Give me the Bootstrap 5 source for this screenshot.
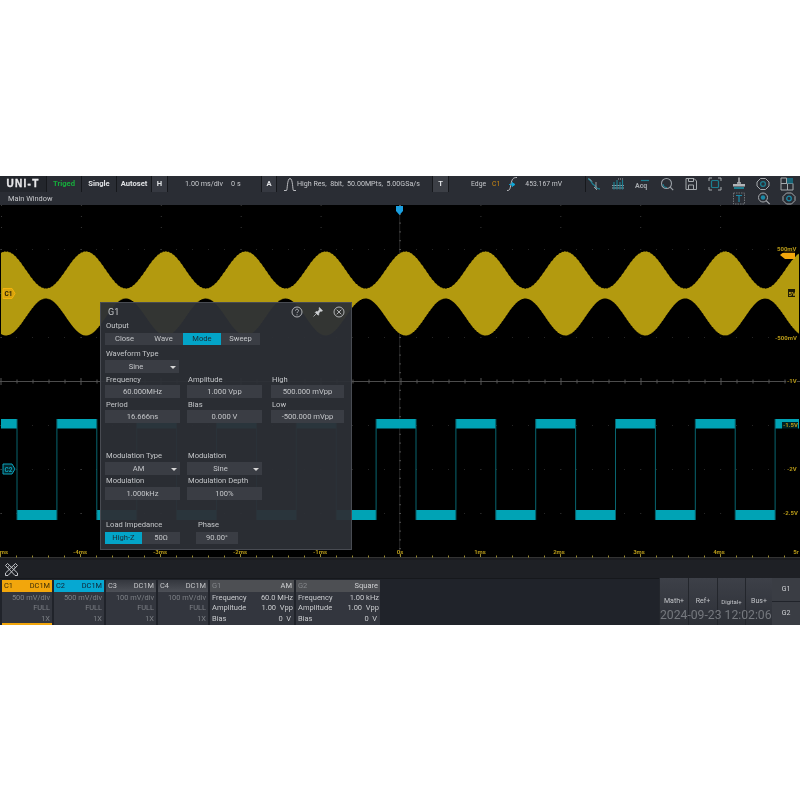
<!DOCTYPE html>
<html lang="en">
<head>
<meta charset="utf-8">
<title>UNI-T scope</title>
<link rel="stylesheet" href="https://cdn.jsdelivr.net/npm/bootstrap@5.3.0/dist/css/bootstrap.min.css">
<style>
html,body{background:#fff;margin:0}
body{font-family:Roboto,"Liberation Sans",sans-serif;font-size:7.6px;line-height:1;color:#c4c6ca}
.scope{margin-top:176px;width:800px;height:449px;background:#1b1d22;overflow:hidden;position:relative;filter:blur(.3px)}
.topbar{height:16px;background:#16181c;gap:1px}
.tb{height:16px;background:#2a2d34;font-size:7.6px;font-weight:700;color:#dfe1e4;flex:none}
.tb-logo{width:46px;background:#23262c;color:#e8e8ea;font-family:"Liberation Sans",sans-serif;font-size:10px;font-weight:700;letter-spacing:1.3px;-webkit-text-stroke:.3px #e8e8ea}
.tb-trig{width:34px;color:#16ad3c}
.tb-single{width:34px}
.tb-auto{width:34px}
.tb-h{width:15px;background:#363941}
.tb-time{width:93px;font-weight:400;font-size:7.2px;color:#c6c8cc;gap:8px;padding-left:17px}
.tb-a{width:14px;background:#363941}
.tb-acq{width:155px;font-weight:400;font-size:7.1px;color:#c6c8cc;padding-left:6px;white-space:nowrap}
.tb-t{width:15px;background:#3c3f46}
.tb-edge{width:136px;font-weight:400;font-size:6.8px;color:#c6c8cc;gap:6px;padding-left:22px}
.or{color:#d08a10}
.tb-tools{flex:1;justify-content:space-between;padding:0 6px 0 1px}
.tb-tools svg,.ttl-tools svg{opacity:.8}
.ttl{height:13px;background:#2a2d34;font-size:7.4px;color:#c8cacd;padding-left:8px}
.ttl-tools{gap:11px;margin-left:auto;padding-right:4px}
.plot{height:355px;background:#000;position:relative;overflow:hidden;flex:none}
.plot>svg{display:block}
.axl{font:700 6px Roboto,"Liberation Sans",sans-serif;fill:#b89a18}
.panel{position:absolute;left:100px;top:97px;width:252px;height:248px;background:rgba(44,47,54,.95);border:1px solid #484b52;padding:0 4px;color:#c4c6c9}
.phead{height:18px;font-size:9px;padding-left:3px}
.pico{gap:9px;margin-left:auto;padding-right:2px}
.plab{height:10px;display:flex;align-items:center;padding-left:1px}
.lab11{height:11px;margin-top:1px}
.lab12{height:12px}
.seg{height:12px;background:#3a3d44}
.seg>span{display:flex;align-items:center;justify-content:center;height:100%}
.seg .on{background:#03a4c8;color:#1b2a33}
.seg-main{width:155px;margin-top:2px}
.sw39{width:39px}.sw38{width:38px}.sw37{width:37px}
.fld{height:13px;background:#3a3d44;display:flex;align-items:center;justify-content:center;position:relative}
.fsel{padding-right:8px;margin-top:1px}
.fsel-type{width:74px;padding-right:12px;margin-top:1px}
.car{position:absolute;right:3px;top:6px;width:0;height:0;border:3px solid transparent;border-top-color:#d6d6d6;border-bottom:0}
.fgrid{display:grid;grid-template-columns:75px 75px 75px;column-gap:7px}
.fgrid .c3{margin-left:2px}
.fgap{margin-top:28px}
.wt{margin-top:4px}
.lrow{margin-top:20px}
.lw{width:75px}
.pw{width:42px;margin-left:16px}
.plabp{padding-left:2px}
.seg2{margin-top:2px}
.fld12{height:12px;margin-top:2px}
.bottom-tools{height:18px;background:#1e2025;padding-left:4px;flex:none}
.chs{height:47px;background:#16181c;padding:2px 0 0 2px;gap:2px;position:relative;flex:none}
.chs-bg{background:#20232a;position:absolute;left:0;right:0;top:1px;bottom:0}
.chan{width:50px;height:45px;background:#33363e;color:#7d8086;font-size:7.4px;text-align:right;position:relative;flex:none}
.chan .hd{height:12px;display:flex;justify-content:space-between;align-items:center;padding:0 2px;background:linear-gradient(#34373e,#4d5057);color:#c5c6c9}
.chan.c1 .hd{background:#f2a60c;color:#3a2c08}
.chan.c2 .hd{background:#06a8d2;color:#123}
.chan.c1:after{content:"";position:absolute;left:0;right:0;bottom:0;height:2px;background:#f2a60c}
.chan p{margin:0;height:10.5px;display:flex;align-items:center;justify-content:flex-end;padding-right:2px}
.gen{width:84px;height:45px;background:#33363e;color:#c9cbce;font-size:7.5px;position:relative;flex:none}
.gen .hd{height:12px;display:flex;justify-content:space-between;align-items:center;padding:0 2px;background:#4d4f53;color:#cfd0d2}
.gen .hd em{font-style:normal;color:#85878b}
.gen p{margin:0;height:10.5px;display:flex;justify-content:space-between;align-items:center;padding:0 1px 0 2px}
.rbtns{margin-left:auto;height:47px;margin-top:-2px;gap:0;position:relative;flex:none}
.rb{height:47px;background:linear-gradient(#3d4048,#2d3037);border-left:1px solid #23262c;color:#c2c4c8;font-size:7px;display:flex;align-items:flex-start;justify-content:center;padding-top:20px;flex:none}
.rb1{width:29px}.rb2{width:29px}.rb3{width:28px}.rb4{width:27px}
.rb3{font-size:6px;padding-top:21px}
.rg{width:28px;gap:1px;flex:none}
.rg span{flex:1;display:flex;align-items:center;justify-content:center;background:#3a3d44;color:#d0d2d5;font-size:7px}
.clock{position:absolute;left:660px;top:31px;font-size:12.2px;color:#75787e;white-space:nowrap}
</style>
</head>
<body>
<div class="scope d-flex flex-column">
  <div class="topbar d-flex">
    <div class="tb tb-logo d-flex align-items-center justify-content-center">UNI-T</div>
    <div class="tb tb-trig d-flex align-items-center justify-content-center">Triged</div>
    <div class="tb tb-single d-flex align-items-center justify-content-center">Single</div>
    <div class="tb tb-auto d-flex align-items-center justify-content-center">Autoset</div>
    <div class="tb tb-h d-flex align-items-center justify-content-center">H</div>
    <div class="tb tb-time d-flex align-items-center"><span>1.00 ms/div</span><span>0 s</span></div>
    <div class="tb tb-a d-flex align-items-center justify-content-center">A</div>
    <div class="tb tb-acq d-flex align-items-center">
      <svg width="14" height="16" viewBox="0 0 14 16" fill="none" stroke="#c8cacd" stroke-width=".9"><path d="M1 14.500h2.500c1 0 .5-12 3.500-12s2.500 12 3.500 12H13"/></svg>
      <span>High Res,&nbsp; 8bit,&nbsp; 50.00MPts,&nbsp; 5.00GSa/s</span>
    </div>
    <div class="tb tb-t d-flex align-items-center justify-content-center">T</div>
    <div class="tb tb-edge d-flex align-items-center">
      <span>Edge</span><span class="or">C1</span>
      <svg width="13" height="16" viewBox="0 0 13 16" fill="none"><path d="M1 14.500c3 0 3-1.500 4-6.500s2-6.500 6-6.500" stroke="#c8cacd" stroke-width=".9"/><path d="M3 8.500h5M9 8.500l-3-2v4z" stroke="#10a8d8" stroke-width=".9" fill="#10a8d8"/></svg>
      <span>453.167 mV</span>
    </div>
    <div class="tb tb-tools d-flex align-items-center">
      <svg width="14" height="14" viewBox="0 0 14 14" fill="none"><path d="M1 2c2 0 3 2 4 4s3 2 4 4 2 2 4 2" stroke="#1a93a8" stroke-width="1.300"/><path d="M2 1.500l3 3M9 5v7M7 10l3 3" stroke="#c4c8cc" stroke-width=".9"/></svg>
      <svg width="14" height="14" viewBox="0 0 14 14" fill="none"><path d="M1 8.500h12M1 11h12" stroke="#c4c8cc" stroke-width=".9"/><path d="M3 12.500V5M6 12.500V3M9 12.500V5M11.500 12.500V3" stroke="#1a93a8" stroke-width="1.200"/><path d="M7 2h6" stroke="#c4c8cc" stroke-width="1.200" stroke-dasharray="1 1"/></svg>
      <svg width="15" height="14" viewBox="0 0 15 14" fill="none"><path d="M6 3.500h8" stroke="#1a93a8" stroke-width="1.200"/><text x="0" y="11" font-family="Roboto,sans-serif" font-size="7" font-weight="700" fill="#c4c8cc">Acq</text></svg>
      <svg width="14" height="14" viewBox="0 0 14 14" fill="none"><circle cx="6.500" cy="6.500" r="5" stroke="#b5bcc2" stroke-width="1.100"/><path d="M3 7a4 4 0 0 0 4 3.500" stroke="#1a93a8" stroke-width="1.100"/><path d="M10.200 10.200l3 3" stroke="#b5bcc2" stroke-width="1.200"/></svg>
      <svg width="14" height="14" viewBox="0 0 14 14" fill="none" stroke="#c4c8cc" stroke-width="1"><path d="M2 1.500h8l2.500 2.500v8.500H2z"/><path d="M4.500 1.500v3h5v-3M4.500 12.500v-4.500h5v4.500"/></svg>
      <svg width="14" height="14" viewBox="0 0 14 14" fill="none"><path d="M1 4V1h3M10 1h3v3M13 10v3h-3M4 13H1v-3" stroke="#c4c8cc" stroke-width="1"/><rect x="3.500" y="3.500" width="7" height="7" rx="1" stroke="#1a93a8" stroke-width="1.200"/></svg>
      <svg width="14" height="14" viewBox="0 0 14 14" fill="none"><path d="M7 .5v5.500M5 6h4" stroke="#d4d6d8" stroke-width="1.500"/><path d="M1 7h12v2.500H1z" fill="#d4d6d8"/><path d="M2 11h10" stroke="#1a93a8" stroke-width="2"/></svg>
      <svg width="14" height="14" viewBox="0 0 14 14" fill="none"><path d="M4.500 1.500h5l3.500 3.500v4l-3.500 3.500h-5L1 9V5z" stroke="#c4c8cc" stroke-width="1"/><circle cx="7" cy="7" r="2.400" stroke="#1a93a8" stroke-width="1.300"/></svg>
      <svg width="14" height="14" viewBox="0 0 14 14" fill="none"><path d="M1 6.500h6.500v6.500H1zM7.500 6.500H13v6.500H7.500z" stroke="#c4c8cc" stroke-width="1"/><path d="M1 1h5.500v5.500H1z" stroke="#c4c8cc" stroke-width="1"/><rect x="7" y="1" width="6" height="5.500" fill="#14748a"/></svg>
    </div>
  </div>
  <div class="ttl d-flex align-items-center">
    <span>Main Window</span>
    <div class="ttl-tools d-flex align-items-center">
      <svg width="14" height="13" viewBox="0 0 14 13" fill="none"><rect x="1.500" y="1" width="11" height="11" stroke="#8a8e93" stroke-width=".9" stroke-dasharray="1.500 1"/><path d="M4 3.500h6M7 3.500V10" stroke="#18a0c4" stroke-width="1.200"/></svg>
      <svg width="14" height="13" viewBox="0 0 14 13" fill="none"><circle cx="6" cy="5.500" r="4.500" stroke="#c4c8cc" stroke-width="1"/><path d="M9.200 8.700l3.500 3.500" stroke="#c4c8cc" stroke-width="1.200"/><circle cx="6" cy="5.500" r="2.200" fill="#18a0c4"/></svg>
      <svg width="14" height="13" viewBox="0 0 14 13" fill="none"><path d="M4.500 1h5l3.500 3.500v4L9.500 12h-5L1 8.500v-4z" stroke="#c4c8cc" stroke-width="1"/><circle cx="7" cy="6.500" r="2.300" stroke="#18a0c4" stroke-width="1.300"/></svg>
    </div>
  </div>
  <div class="plot">
    <svg id="wave" width="800" height="355" viewBox="0 205 800 355"></svg>
    <div class="panel">
      <div class="phead d-flex align-items-center"><span>G1</span>
        <div class="pico d-flex align-items-center">
          <svg width="12" height="12" viewBox="0 0 12 12" fill="none" stroke="#cfd1d4" stroke-width=".8"><circle cx="6" cy="6" r="5"/><path d="M4.500 4.700c0-2 3-2 3 0 0 1.200-1.500 1.200-1.500 2.400M6 8.300v1"/></svg>
          <svg width="12" height="12" viewBox="0 0 12 12" fill="#cfd1d4" stroke="#cfd1d4" stroke-width=".7"><path d="M7.300 1.500l3.200 3.200-1 .6-.9-.2-1.900 1.900.2 1.500-.8.700-2.800-2.800.7-.8 1.500.2 1.900-1.900-.2-.9z"/><path d="M4 8l-2.500 2.500" fill="none"/></svg>
          <svg width="12" height="12" viewBox="0 0 12 12" fill="none" stroke="#cfd1d4" stroke-width=".8"><circle cx="6" cy="6" r="5"/><path d="M3.700 3.700l4.600 4.600M8.300 3.700l-4.600 4.600"/></svg>
        </div>
      </div>
      <div class="plab">Output</div>
      <div class="seg seg-main d-flex"><span class="sw39">Close</span><span class="sw39">Wave</span><span class="on sw38">Mode</span><span class="sw39">Sweep</span></div>
      <div class="plab wt">Waveform Type</div>
      <div class="fld fsel-type">Sine<i class="car"></i></div>
      <div class="fgrid">
        <div class="plab lab11">Frequency</div><div class="plab lab11">Amplitude</div><div class="plab lab11 c3">High</div>
        <div class="fld">60.000MHz</div><div class="fld">1.000 Vpp</div><div class="fld c3">500.000 mVpp</div>
        <div class="plab lab11">Period</div><div class="plab lab11">Bias</div><div class="plab lab11 c3">Low</div>
        <div class="fld">16.666ns</div><div class="fld">0.000 V</div><div class="fld c3">-500.000 mVpp</div>
      </div>
      <div class="fgrid fgap">
        <div class="plab">Modulation Type</div><div class="plab">Modulation</div><div></div>
        <div class="fld fsel">AM<i class="car"></i></div><div class="fld fsel">Sine<i class="car"></i></div><div></div>
        <div class="plab lab12">Modulation</div><div class="plab lab12">Modulation Depth</div><div></div>
        <div class="fld">1.000kHz</div><div class="fld">100%</div><div></div>
      </div>
      <div class="d-flex lrow">
        <div class="lw"><div class="plab">Load Impedance</div>
          <div class="seg seg2 d-flex"><span class="on sw37">High-Z</span><span class="sw38">50Ω</span></div></div>
        <div class="pw"><div class="plab plabp">Phase</div>
          <div class="fld fld12">90.00°</div></div>
      </div>
    </div>
  </div>
  <div class="bottom-tools d-flex align-items-center">
    <svg width="15" height="15" viewBox="0 0 15 15" fill="none" stroke="#c4c6ca" stroke-width="1"><path d="M1.500 3.500l2-2 10 9.500v2.500h-2.500zM13.500 3.500l-2-2-10 9.500v2.500H4z"/><path d="M3.500 5.500l1.500-1M10 4.500l1.500 1"/></svg>
  </div>
  <div class="chs d-flex">
    <div class="chs-bg"></div>
    <div class="chan c1"><div class="hd"><span>C1</span><span>DC1M</span></div><p>500 mV/div</p><p>FULL</p><p>1X</p></div>
    <div class="chan c2"><div class="hd"><span>C2</span><span>DC1M</span></div><p>500 mV/div</p><p>FULL</p><p>1X</p></div>
    <div class="chan"><div class="hd"><span>C3</span><span>DC1M</span></div><p>100 mV/div</p><p>FULL</p><p>1X</p></div>
    <div class="chan"><div class="hd"><span>C4</span><span>DC1M</span></div><p>100 mV/div</p><p>FULL</p><p>1X</p></div>
    <div class="gen"><div class="hd"><em>G1</em><span>AM</span></div><p><span>Frequency</span><span>60.0 MHz</span></p><p><span>Amplitude</span><span>1.00&nbsp; Vpp</span></p><p><span>Bias</span><span>0&nbsp; V&nbsp;</span></p></div>
    <div class="gen"><div class="hd"><em>G2</em><span>Square</span></div><p><span>Frequency</span><span>1.00 kHz</span></p><p><span>Amplitude</span><span>1.00&nbsp; Vpp</span></p><p><span>Bias</span><span>0&nbsp; V&nbsp;</span></p></div>
    <div class="rbtns d-flex">
      <div class="rb rb1">Math+</div><div class="rb rb2">Ref+</div><div class="rb rb3">Digital+</div><div class="rb rb4">Bus+</div>
      <div class="rg d-flex flex-column"><span>G1</span><span>G2</span></div>
    </div>
    <div class="clock">2024-09-23 12:02:06</div>
  </div>
</div>
<script>
(function(){
  var s='',i,j;
  // grid dots
  for(i=0;i<=10;i++){var gx=1+i*79.9;
    if(i==5)continue;
    for(j=205;j<552;j+=44){ s+='<rect x="'+gx.toFixed(1)+'" y="'+j+'" width="1" height="1" fill="#3a3a3a"/>'; }
    s+='<rect x="'+gx.toFixed(1)+'" y="216" width="1" height="1" fill="#3a3a3a"/><rect x="'+gx.toFixed(1)+'" y="227" width="1" height="1" fill="#3a3a3a"/>';
  }
  for(j=249;j<552;j+=44){for(i=0;i<800;i+=16){s+='<rect x="'+i+'" y="'+j+'" width="1" height="1" fill="#262626"/>';}}
  // center ticks
  s+='<rect x="0" y="381" width="800" height="1" fill="#4c4c4c"/>';
  for(j=205;j<556;j+=8.8){s+='<rect x="399" y="'+j.toFixed(1)+'" width="2" height="1" fill="#555"/>';}
  s+='<rect x="399.500" y="206" width=".6" height="350" fill="#3a3a3a"/>';
  for(i=0;i<=800;i+=16){s+='<rect x="'+(i+0.5)+'" y="'+(i%80==0?378:379.500)+'" width="1" height="'+(i%80==0?7:4)+'" fill="#555"/>';}
  // AM waveform
  var top='',bot='',x;
  for(x=1;x<=799;x+=1){
    var e=23.5+18.5*Math.cos((x-6)/79.9*2*Math.PI);
    var n1=.4*Math.sin(x*2.3),n2=.4*Math.sin(x*3.1);
    top+=(x==1?'M':'L')+x+' '+(293.5-e+n1).toFixed(1);
    bot='L'+x+' '+(293.5+e+n2).toFixed(1)+bot;
  }
  s+='<path d="'+top+bot+'Z" fill="#b39a0f"/>';
  // square waveform
  var hp=39.9,e0=17,k;
  for(k=-1;k<21;k++){
    var a=e0+k*hp,b=a+hp;
    var x0=Math.max(1,a),x1=Math.min(799,b);
    if(x1<=x0)continue;
    var high=(k%2!=0);
    s+='<rect x="'+x0.toFixed(1)+'" y="'+(high?419:510)+'" width="'+(x1-x0).toFixed(1)+'" height="'+(high?9.500:10)+'" fill="#00a3b5"/>';
    if(a>0)s+='<rect x="'+(a-.5).toFixed(1)+'" y="419" width="1" height="101" fill="#08656f"/>';
  }
  // trigger + markers
  s+='<path d="M396 206h7v5l-3.500 4-3.500-4z" fill="#1a9fe0"/>';
  s+='<path d="M3 288.500h9l3 5-3 5H3z" fill="#d8a40e" stroke="#f5b20c"/><text x="4.500" y="296" class="axl" style="fill:#2b2205;font-size:6.500px">C1</text>';
  s+='<path d="M3 464h9l3 5-3 5H3z" fill="#04282e" stroke="#0aa3bc"/><text x="4.500" y="471.500" class="axl" style="fill:#0aa3bc;font-size:6.500px">C2</text>';
  s+='<path d="M785 251h10v8h-10l-5-4z" fill="#f2a60c"/>';
  s+='<rect x="788" y="289" width="7" height="8" fill="#1c1a06"/><text x="788.500" y="295.500" class="axl" style="fill:#c8a818">5V</text>';
  // right labels
  [['500mV',249,777,21],['-500mV',338,775,24],['-1V',381,787,11],['-1.5V',425,783,16],['-2V',469,787,11],['-2.5V',513,783,16]].forEach(function(l){
    s+='<rect x="'+(l[2]-1)+'" y="'+(l[1]-3)+'" width="'+l[3]+'" height="7" fill="#000" opacity=".8"/><text x="'+l[2]+'" y="'+(l[1]+2)+'" class="axl">'+l[0]+'</text>';});
  // time axis
  s+='<rect x="0" y="558" width="800" height="2" fill="#1a1b1f"/>';
  s+='<rect x="0" y="557" width="800" height="1" fill="#333"/>';
  for(i=0;i<=800;i+=16){s+='<rect x="'+i+'" y="'+(i%80==0?554:555.500)+'" width="1" height="'+(i%80==0?3:2)+'" fill="#9b8c30"/>';}
  [['ms',4],['-4ms',80],['-3ms',160],['-2ms',240],['-1ms',320],['0s',400],['1ms',480],['2ms',559],['3ms',639],['4ms',719],['5r',796]].forEach(function(l){
    s+='<text x="'+l[1]+'" y="553.500" text-anchor="middle" class="axl">'+l[0]+'</text>';});
  document.getElementById('wave').innerHTML=s;
})();
</script>
</body>
</html>
